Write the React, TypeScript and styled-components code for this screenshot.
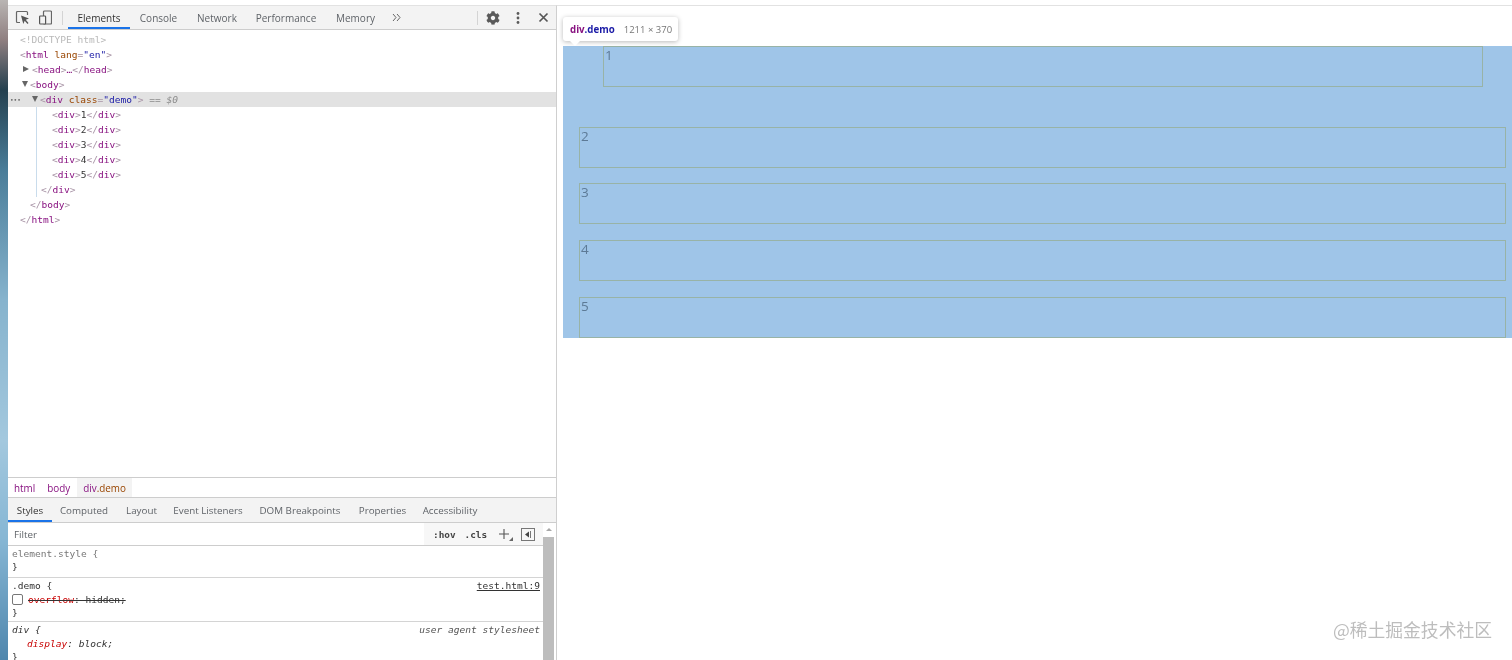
import styled, { createGlobalStyle } from "styled-components";
import { FaCog } from "react-icons/fa";

const GlobalStyle = createGlobalStyle`
  html, body {
    margin: 0;
    padding: 0;
    background: #fff;
    overflow: hidden;
  }
`;

const Screen = styled.div`
  display: flex;
  width: 1512px;
  height: 660px;
  overflow: hidden;
  background: #fff;
  filter: blur(0.3px);
  font-family: "Open Sans", "Noto Sans", sans-serif;
`;

const DesktopStrip = styled.div`
  flex: 0 0 8px;
  background: linear-gradient(
    180deg,
    #b9b5b3 0,
    #8f7f80 40px,
    #24404f 90px,
    #4a7d99 170px,
    #86b3cd 300px,
    #a3c8de 440px,
    #86b6d4 540px,
    #4f86ad 660px
  );
`;

const DevTools = styled.div`
  flex: 0 0 549px;
  box-sizing: border-box;
  margin-top: 5px;
  border-top: 1px solid #e2e2e2;
  border-right: 1px solid #cfcfcf;
  display: flex;
  flex-direction: column;
  background: #fff;
`;

const Toolbar = styled.div`
  flex: 0 0 24px;
  box-sizing: border-box;
  display: flex;
  align-items: center;
  background: #f3f3f3;
  border-bottom: 1px solid #cdcdcd;
  color: #5a5a5a;
`;

const ToolIcon = styled.svg<{ $gap: number }>`
  flex: none;
  margin-left: ${(p) => p.$gap}px;
`;

const ToolSeparator = styled.div<{ $gap: number }>`
  flex: none;
  width: 1px;
  height: 14px;
  margin-left: ${(p) => p.$gap}px;
  background: #d4d4d4;
`;

const MainTab = styled.div<{ $active?: boolean; $width: number }>`
  flex: none;
  box-sizing: border-box;
  width: ${(p) => p.$width}px;
  height: 23px;
  line-height: 25px;
  text-align: center;
  font-size: 10px;
  white-space: nowrap;
  color: ${(p) => (p.$active ? "#333" : "#5f6368")};
  border-bottom: 2px solid ${(p) => (p.$active ? "#1a73e8" : "transparent")};
`;

const Gear = styled(FaCog)`
  flex: none;
  margin-left: 8px;
  width: 14px;
  height: 14px;
  color: #5a5a5a;
`;

const Tree = styled.div`
  flex: 1;
  min-height: 0;
  padding-top: 2px;
  font-family: "DejaVu Sans Mono", "Liberation Mono", monospace;
  font-size: 9.55px;
  color: #333;
`;

const TreeLine = styled.div<{ $indent: number; $selected?: boolean }>`
  position: relative;
  height: 15px;
  line-height: 15px;
  box-sizing: border-box;
  padding-left: ${(p) => p.$indent}px;
  white-space: pre;
  background: ${(p) => (p.$selected ? "#e2e2e2" : "transparent")};
`;

const Nest = styled.div`
  margin-left: 28px;
  border-left: 1px solid #c9dcec;
`;

const Dots = styled.span`
  position: absolute;
  left: 2px;
  top: 0;
  color: #666;
  font-size: 6px;
`;

const Caret = styled.span<{ $open?: boolean }>`
  display: inline-block;
  margin-right: 2px;
  vertical-align: 1px;
  ${(p) =>
    p.$open
      ? `border-left: 3.5px solid transparent;
         border-right: 3.5px solid transparent;
         border-top: 6px solid #666;`
      : `border-top: 3.5px solid transparent;
         border-bottom: 3.5px solid transparent;
         border-left: 6px solid #666;
         margin-right: 3px;`}
`;

const Doctype = styled.span`
  color: #b9b9b9;
`;
const Br = styled.span`
  color: #a894a6;
`;
const Tag = styled.span`
  color: #881280;
`;
const Attr = styled.span`
  color: #994500;
`;
const Val = styled.span`
  color: #1a1aa6;
`;
const Eq = styled.span`
  color: #8b8b8b;
  font-style: italic;
`;

const Crumbs = styled.div`
  flex: 0 0 21px;
  min-height: 0;
  box-sizing: border-box;
  display: flex;
  align-items: stretch;
  border-top: 1px solid #cdcdcd;
  border-bottom: 1px solid #cdcdcd;
  font-size: 9.9px;
  color: #881280;
`;

const Crumb = styled.span<{ $active?: boolean }>`
  height: 19px;
  line-height: 20px;
  padding: 0 6px;
  margin-left: ${(p) => (p.$active ? 1 : 0)}px;
  background: ${(p) => (p.$active ? "#f3f3f3" : "transparent")};
`;

const CrumbClass = styled.span`
  color: #994500;
`;

const SubTabs = styled.div`
  flex: 0 0 25px;
  box-sizing: border-box;
  display: flex;
  background: #f3f3f3;
  border-bottom: 1px solid #cdcdcd;
`;

const SubTab = styled.div<{ $active?: boolean; $width: number }>`
  flex: none;
  box-sizing: border-box;
  width: ${(p) => p.$width}px;
  height: 24px;
  line-height: 25px;
  text-align: center;
  font-size: 9.8px;
  white-space: nowrap;
  color: ${(p) => (p.$active ? "#333" : "#5f6368")};
  border-bottom: 2px solid ${(p) => (p.$active ? "#1a73e8" : "transparent")};
`;

const LowerPane = styled.div`
  flex: 0 0 137px;
  display: flex;
  overflow: hidden;
`;

const StylesColumn = styled.div`
  flex: 1;
  min-width: 0;
`;

const FilterBar = styled.div`
  height: 23px;
  box-sizing: border-box;
  display: flex;
  align-items: center;
  border-bottom: 1px solid #cdcdcd;
`;

const FilterInput = styled.div`
  flex: 0 0 416px;
  box-sizing: border-box;
  height: 22px;
  line-height: 23px;
  padding-left: 6px;
  font-size: 9.8px;
  color: #5f6368;
`;

const FilterTools = styled.div`
  flex: 1;
  height: 22px;
  display: flex;
  align-items: center;
  background: #f7f7f7;
  font-family: "DejaVu Sans Mono", monospace;
  font-size: 9.4px;
  color: #444;
`;

const FilterToken = styled.span<{ $gap: number }>`
  margin-left: ${(p) => p.$gap}px;
  font-weight: 600;
`;

const Rule = styled.div<{ $bottom: number }>`
  border-bottom: 1px solid #d4d4d4;
  padding: 0 3px ${(p) => p.$bottom}px 4px;
  font-family: "DejaVu Sans Mono", "Liberation Mono", monospace;
  font-size: 9.55px;
  color: #333;

  &:last-child {
    border-bottom: 0;
  }
`;

const RuleLine = styled.div<{ $italic?: boolean; $indent?: boolean; $muted?: boolean }>`
  display: flex;
  align-items: center;
  height: 14px;
  white-space: pre;
  font-style: ${(p) => (p.$italic ? "italic" : "normal")};
  color: ${(p) => (p.$muted ? "#777" : "#333")};
  padding-left: ${(p) => (p.$indent ? 15 : 0)}px;

  &:last-child {
    height: 12px;
  }
`;

const Source = styled.span<{ $link?: boolean }>`
  margin-left: auto;
  font-style: ${(p) => (p.$link ? "normal" : "italic")};
  text-decoration: ${(p) => (p.$link ? "underline" : "none")};
  color: ${(p) => (p.$link ? "#333" : "#555")};
`;

const CheckBox = styled.span`
  flex: none;
  width: 9px;
  height: 9px;
  margin-right: 5px;
  border: 1px solid #777;
  border-radius: 2px;
  background: #fff;
`;

const Struck = styled.span`
  text-decoration: line-through;
  color: #333;
`;

const PropName = styled.span`
  color: #c80000;
`;

const Scrollbar = styled.div`
  flex: 0 0 13px;
  box-sizing: border-box;
  padding-right: 2px;
  display: flex;
  flex-direction: column;
`;

const ScrollArrow = styled.div`
  flex: 0 0 14px;
  display: flex;
  justify-content: center;
  padding-top: 5px;
  box-sizing: border-box;

  &::before {
    content: "";
    border-left: 3px solid transparent;
    border-right: 3px solid transparent;
    border-bottom: 3px solid #a8a8a8;
    height: 0;
  }
`;

const ScrollThumb = styled.div`
  flex: 1;
  background: #bdbdbd;
`;

const Page = styled.div`
  flex: 1;
  position: relative;
  box-sizing: border-box;
  margin-top: 5px;
  border-top: 1px solid #e2e2e2;
  padding: 40px 0 0 6px;
  font-family: "Open Sans", sans-serif;
`;

const Demo = styled.div`
  height: 292px;
  padding: 0 6px 0 16px;
  display: flex;
  flex-direction: column;
  background: #9fc5e8;
`;

const DemoRow = styled.div<{ $first?: boolean; $gapAfter: number }>`
  flex: none;
  box-sizing: border-box;
  height: 41px;
  margin: ${(p) => (p.$first ? "0 23px 0 24px" : "0")};
  margin-bottom: ${(p) => p.$gapAfter}px;
  padding-left: 1px;
  border: 1px solid #98b3a6;
  font-size: 13.5px;
  line-height: 16px;
  color: #5d7a96;
`;

const Tip = styled.div`
  position: absolute;
  left: 6px;
  top: 11px;
  width: 115px;
  height: 24px;
  box-sizing: border-box;
  padding-left: 7px;
  display: flex;
  align-items: center;
  background: #fff;
  border-radius: 3px;
  box-shadow: 0 1px 5px rgba(0, 0, 0, 0.28);
  font-size: 9.7px;

  &::after {
    content: "";
    position: absolute;
    left: 7px;
    top: 24px;
    border-left: 5px solid transparent;
    border-right: 5px solid transparent;
    border-top: 5px solid #fff;
  }
`;

const TipName = styled.span`
  font-weight: 700;
  color: #881280;
`;
const TipClass = styled.span`
  font-weight: 700;
  color: #1a1aa6;
`;
const TipSize = styled.span`
  margin-left: 9px;
  font-size: 9.5px;
  color: #777;
`;

const Watermark = styled.div`
  position: absolute;
  right: 20px;
  bottom: 19px;
  font-family: "Noto Sans CJK SC", "Open Sans", sans-serif;
  font-size: 17.8px;
  line-height: 24px;
  color: #bdbdbd;
  white-space: nowrap;
`;

const Open = ({ name, children }: { name: string; children?: React.ReactNode }) => (
  <>
    <Br>&lt;</Br>
    <Tag>{name}</Tag>
    {children}
    <Br>&gt;</Br>
  </>
);

const Close = ({ name }: { name: string }) => (
  <>
    <Br>&lt;/</Br>
    <Tag>{name}</Tag>
    <Br>&gt;</Br>
  </>
);

const mainTabs = [
  { label: "Elements", width: 62, active: true },
  { label: "Console", width: 57 },
  { label: "Network", width: 60 },
  { label: "Performance", width: 78 },
  { label: "Memory", width: 61 },
];

const subTabs = [
  { label: "Styles", width: 44, active: true },
  { label: "Computed", width: 64 },
  { label: "Layout", width: 51 },
  { label: "Event Listeners", width: 82 },
  { label: "DOM Breakpoints", width: 102 },
  { label: "Properties", width: 63 },
  { label: "Accessibility", width: 72 },
];

const demoRows = [
  { n: 1, gap: 40, first: true },
  { n: 2, gap: 15 },
  { n: 3, gap: 16 },
  { n: 4, gap: 16 },
  { n: 5, gap: 0 },
];

export default function App() {
  return (
    <>
      <GlobalStyle />
      <Screen>
        <DesktopStrip />
        <DevTools>
          <Toolbar>
            <ToolIcon $gap={7} width="15" height="15" viewBox="0 0 15 15" fill="none">
              <path d="M5 12.5H2.5a1 1 0 0 1-1-1v-9a1 1 0 0 1 1-1h9a1 1 0 0 1 1 1V5" stroke="#666" strokeWidth="1.2" />
              <path d="M6 5.5l8 3-3.2 1.2L13.5 13l-1 1-2.8-3.2L8.3 14z" fill="#555" />
            </ToolIcon>
            <ToolIcon $gap={9} width="13" height="15" viewBox="0 0 13 15" fill="none">
              <rect x="4.5" y="1" width="8" height="13" rx="1" stroke="#666" strokeWidth="1.2" />
              <rect x="0.6" y="6" width="6" height="8" rx="0.8" fill="#f3f3f3" stroke="#555" strokeWidth="1.2" />
            </ToolIcon>
            <ToolSeparator $gap={10} />
            <MainTab $width={5} />
            {mainTabs.map((t) => (
              <MainTab key={t.label} $width={t.width} $active={t.active}>
                {t.label}
              </MainTab>
            ))}
            <ToolIcon $gap={6} width="9" height="9" viewBox="0 0 9 9" fill="none">
              <path d="M1 1l3 3.5L1 8M5 1l3 3.5L5 8" stroke="#666" strokeWidth="1" />
            </ToolIcon>
            <ToolSeparator $gap={76} />
            <Gear />
            <ToolIcon $gap={16} width="4" height="14" viewBox="0 0 4 14">
              <circle cx="2" cy="2.5" r="1.4" fill="#5a5a5a" />
              <circle cx="2" cy="7" r="1.4" fill="#5a5a5a" />
              <circle cx="2" cy="11.5" r="1.4" fill="#5a5a5a" />
            </ToolIcon>
            <ToolIcon $gap={18} width="11" height="11" viewBox="0 0 11 11" fill="none">
              <path d="M1.5 1.5l8 8M9.5 1.5l-8 8" stroke="#555" strokeWidth="1.7" />
            </ToolIcon>
          </Toolbar>

          <Tree>
            <TreeLine $indent={12}>
              <Doctype>&lt;!DOCTYPE html&gt;</Doctype>
            </TreeLine>
            <TreeLine $indent={12}>
              <Open name="html">
                {" "}
                <Attr>lang</Attr>
                <Br>=</Br>
                <Val>"en"</Val>
              </Open>
            </TreeLine>
            <TreeLine $indent={15}>
              <Caret />
              <Open name="head" />
              <Tag>…</Tag>
              <Close name="head" />
            </TreeLine>
            <TreeLine $indent={14}>
              <Caret $open />
              <Open name="body" />
            </TreeLine>
            <TreeLine $indent={24} $selected>
              <Dots>•••</Dots>
              <Caret $open />
              <Open name="div">
                {" "}
                <Attr>class</Attr>
                <Br>=</Br>
                <Val>"demo"</Val>
              </Open>
              <Eq> == $0</Eq>
            </TreeLine>
            <Nest>
              {[1, 2, 3, 4, 5].map((n) => (
                <TreeLine key={n} $indent={15}>
                  <Open name="div" />
                  {n}
                  <Close name="div" />
                </TreeLine>
              ))}
              <TreeLine $indent={4}>
                <Close name="div" />
              </TreeLine>
            </Nest>
            <TreeLine $indent={22}>
              <Close name="body" />
            </TreeLine>
            <TreeLine $indent={12}>
              <Close name="html" />
            </TreeLine>
          </Tree>

          <Crumbs>
            <Crumb>html</Crumb>
            <Crumb>body</Crumb>
            <Crumb $active>
              div<CrumbClass>.demo</CrumbClass>
            </Crumb>
          </Crumbs>

          <SubTabs>
            {subTabs.map((t) => (
              <SubTab key={t.label} $width={t.width} $active={t.active}>
                {t.label}
              </SubTab>
            ))}
          </SubTabs>

          <LowerPane>
            <StylesColumn>
              <FilterBar>
                <FilterInput>Filter</FilterInput>
                <FilterTools>
                  <FilterToken $gap={9}>:hov</FilterToken>
                  <FilterToken $gap={9}>.cls</FilterToken>
                  <ToolIcon $gap={12} width="15" height="15" viewBox="0 0 15 15" fill="none">
                    <path d="M5 2v10M0 7h10" stroke="#555" strokeWidth="1.1" />
                    <path d="M14 10v4h-4z" fill="#666" />
                  </ToolIcon>
                  <ToolIcon $gap={7} width="14" height="13" viewBox="0 0 14 13" fill="none">
                    <rect x="0.5" y="0.5" width="13" height="12" stroke="#777" />
                    <path d="M9.5 3v7" stroke="#777" />
                    <path d="M8 3.5v6L4 6.5z" fill="#444" />
                  </ToolIcon>
                </FilterTools>
              </FilterBar>
              <Rule $bottom={5}>
                <RuleLine $muted>element.style {"{"}</RuleLine>
                <RuleLine>{"}"}</RuleLine>
              </Rule>
              <Rule $bottom={3}>
                <RuleLine>
                  .demo {"{"}
                  <Source $link>test.html:9</Source>
                </RuleLine>
                <RuleLine>
                  <CheckBox />
                  <Struck>
                    <PropName>overflow</PropName>: hidden;
                  </Struck>
                </RuleLine>
                <RuleLine>{"}"}</RuleLine>
              </Rule>
              <Rule $bottom={2}>
                <RuleLine $italic>
                  div {"{"}
                  <Source>user agent stylesheet</Source>
                </RuleLine>
                <RuleLine $italic $indent>
                  <PropName>display</PropName>: block;
                </RuleLine>
                <RuleLine>{"}"}</RuleLine>
              </Rule>
            </StylesColumn>
            <Scrollbar>
              <ScrollArrow />
              <ScrollThumb />
            </Scrollbar>
          </LowerPane>
        </DevTools>

        <Page>
          <Demo>
            {demoRows.map((r) => (
              <DemoRow key={r.n} $first={r.first} $gapAfter={r.gap}>
                {r.n}
              </DemoRow>
            ))}
          </Demo>
          <Tip>
            <TipName>div</TipName>
            <TipClass>.demo</TipClass>
            <TipSize>1211 × 370</TipSize>
          </Tip>
          <Watermark>@稀土掘金技术社区</Watermark>
        </Page>
      </Screen>
    </>
  );
}
